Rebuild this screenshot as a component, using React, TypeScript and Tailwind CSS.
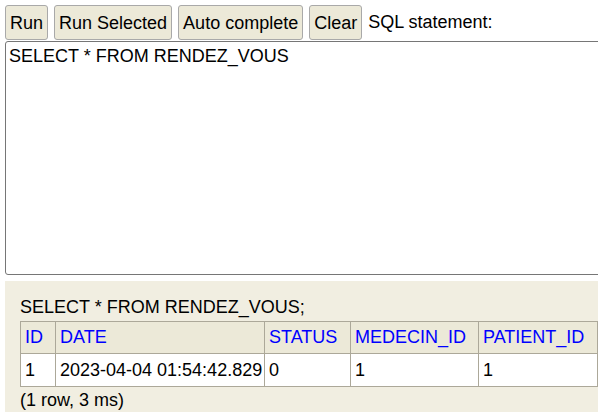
import React from 'react';

const cols = [
  { name: 'ID', w: 'w-[35px]' },
  { name: 'DATE', w: 'w-[209px]' },
  { name: 'STATUS', w: 'w-[86px]' },
  { name: 'MEDECIN_ID', w: 'w-[128px]' },
  { name: 'PATIENT_ID', w: 'w-[119px]' },
];

const row = ['1', '2023-04-04 01:54:42.829', '0', '1', '1'];

function Btn({ label }: { label: string }) {
  return (
    <button className="h-[35px] px-[4px] rounded-[3px] border border-[#a9a9a9] bg-[#ece9d8] text-black text-[18px] leading-none">
      {label}
    </button>
  );
}

export default function App() {
  return (
    <div className="w-[598px] h-[412px] overflow-hidden bg-white font-['Liberation_Sans',Arial,sans-serif] text-[18px] text-black">
      <div className="flex items-center gap-[6px] pl-[5px] pt-[5px]">
        <Btn label="Run" />
        <Btn label="Run Selected" />
        <Btn label="Auto complete" />
        <Btn label="Clear" />
        <span>SQL statement:</span>
      </div>
      <div className="ml-[5px] mt-[1px] h-[234px] w-[620px] border border-[#767676] rounded-[3px] px-[3px] py-[4px] leading-[20px]">
        SELECT * FROM RENDEZ_VOUS
      </div>
      <div className="ml-[5px] mt-[6px] h-[140px] bg-[#f1eee1] pl-[15px] pt-[16px]">
        <div className="leading-[20px] mb-[4px]">SELECT * FROM RENDEZ_VOUS;</div>
        <table className="table-fixed border-collapse w-[577px]">
          <thead>
            <tr>
              {cols.map((c) => (
                <th
                  key={c.name}
                  className={`${c.w} h-[32px] border border-[#aca899] bg-[#ece9d8] px-[4px] text-left font-normal text-[#0000ff]`}
                >
                  {c.name}
                </th>
              ))}
            </tr>
          </thead>
          <tbody>
            <tr>
              {row.map((v, i) => (
                <td key={i} className="h-[33px] border border-[#aca899] bg-white px-[4px] whitespace-nowrap">
                  {v}
                </td>
              ))}
            </tr>
          </tbody>
        </table>
        <div className="leading-[20px] mt-[3px]">(1 row, 3 ms)</div>
      </div>
    </div>
  );
}
